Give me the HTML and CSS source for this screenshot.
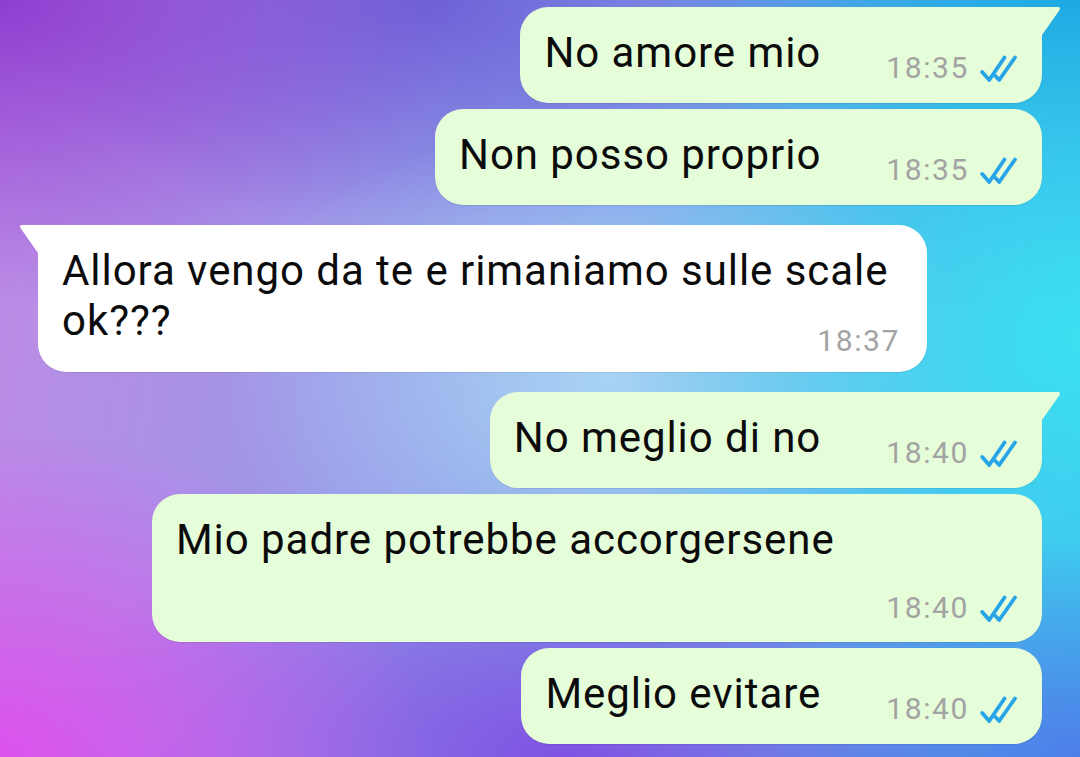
FILE: index.html
```html
<!DOCTYPE html>
<html lang="it">
<head>
<meta charset="utf-8">
<title>Chat</title>
<link rel="stylesheet" href="styles.css">
</head>
<body>
<svg width="0" height="0" class="defs" aria-hidden="true">
  <symbol id="ticks" viewBox="0 0 37 28">
    <path d="M2.2 17 L9.2 25 L24.5 2.5" fill="none" stroke="currentColor" stroke-width="3.8" stroke-linecap="round" stroke-linejoin="round"/>
    <path d="M15.5 21 L19.2 25 L35 2.5" fill="none" stroke="currentColor" stroke-width="3.8" stroke-linecap="round" stroke-linejoin="round"/>
  </symbol>
</svg>
<main class="chat">
  <div class="msg out tail group">
    <div class="bubble inline">
      <span class="text">No amore mio</span>
      <span class="meta"><span class="time">18:35</span><svg class="check"><use href="#ticks"/></svg></span>
    </div>
  </div>
  <div class="msg out">
    <div class="bubble inline">
      <span class="text">Non posso proprio</span>
      <span class="meta"><span class="time">18:35</span><svg class="check"><use href="#ticks"/></svg></span>
    </div>
  </div>
  <div class="msg in tail group">
    <div class="bubble stack overlap">
      <div class="text">Allora vengo da te e rimaniamo sulle scale <span class="last">ok???</span></div>
      <div class="meta"><span class="time">18:37</span></div>
    </div>
  </div>
  <div class="msg out tail group">
    <div class="bubble inline">
      <span class="text">No meglio di no</span>
      <span class="meta"><span class="time">18:40</span><svg class="check"><use href="#ticks"/></svg></span>
    </div>
  </div>
  <div class="msg out">
    <div class="bubble stack below">
      <div class="text">Mio padre potrebbe accorgersene</div>
      <div class="meta"><span class="time">18:40</span><svg class="check"><use href="#ticks"/></svg></div>
    </div>
  </div>
  <div class="msg out">
    <div class="bubble inline">
      <span class="text">Meglio evitare</span>
      <span class="meta"><span class="time">18:40</span><svg class="check"><use href="#ticks"/></svg></span>
    </div>
  </div>
</main>
</body>
</html>
```
FILE: styles.css
```css
html, body {
  margin: 0;
  padding: 0;
  width: 1080px;
  height: 757px;
  overflow: hidden;
}

body {
  font-family: Roboto, "Noto Sans", "Liberation Sans", sans-serif;
  background:
    radial-gradient(ellipse 430px 330px at 0% 100%, rgba(222, 78, 236, 0.95), rgba(222, 78, 236, 0) 100%),
    radial-gradient(ellipse 330px 220px at 100% 100%, rgba(80, 120, 232, 0.9), rgba(80, 120, 232, 0) 100%),
    radial-gradient(ellipse 460px 400px at 100% 45%, rgba(58, 226, 242, 0.95), rgba(58, 226, 242, 0) 100%),
    radial-gradient(ellipse 380px 260px at 56% 50%, rgba(176, 220, 246, 0.85), rgba(176, 220, 246, 0) 100%),
    radial-gradient(ellipse 460px 300px at 0% 0%, rgba(142, 62, 208, 1), rgba(142, 62, 208, 0) 100%),
    radial-gradient(ellipse 420px 240px at 40% 0%, rgba(104, 92, 214, 0.9), rgba(104, 92, 214, 0) 100%),
    radial-gradient(ellipse 520px 280px at 52% 100%, rgba(128, 78, 226, 0.95), rgba(128, 78, 226, 0) 100%),
    radial-gradient(ellipse 420px 300px at 100% 0%, rgba(24, 160, 224, 1), rgba(24, 160, 224, 0) 100%),
    linear-gradient(100deg, #c08ae6 0%, #8f9ce8 45%, #3cbcec 100%);
}

.defs {
  position: absolute;
  width: 0;
  height: 0;
}

.chat {
  display: flex;
  flex-direction: column;
  gap: 6px;
  padding: 7px 38px 0 38px;
}

.msg {
  display: flex;
}

.msg.group {
  margin-top: 14px;
}

.msg.group:first-child {
  margin-top: 0;
}

.msg.out {
  justify-content: flex-end;
}

.msg.in {
  justify-content: flex-start;
}

.bubble {
  position: relative;
  box-sizing: border-box;
  max-width: 890px;
  border-radius: 28px;
  padding: 21px 25px 20px 24px;
  box-shadow: 0 1px 1px rgba(0, 0, 0, 0.08);
}

.bubble.stack {
  flex: 0 0 890px;
}

.in .bubble.stack {
  flex-basis: 889px;
}

.out .bubble {
  background: #e6fdd9;
}

.in .bubble {
  background: #ffffff;
  padding-right: 27px;
}

.out.tail .bubble {
  border-top-right-radius: 0;
}

.in.tail .bubble {
  border-top-left-radius: 0;
}

.out.tail .bubble::after,
.in.tail .bubble::after {
  content: "";
  position: absolute;
  top: 0;
  width: 19px;
  height: 28px;
}

.out.tail .bubble::after {
  left: 100%;
  background: #e6fdd9;
  clip-path: path("M0 0 H15.5 Q19.5 0 17.4 3.2 L0 28 Z");
}

.in.tail .bubble::after {
  right: 100%;
  background: #ffffff;
  clip-path: path("M19 0 H3.5 Q-0.5 0 1.6 3.2 L19 28 Z");
}

.text {
  font-size: 42px;
  line-height: 50px;
  letter-spacing: 0.95px;
  color: #0b0b0b;
}

.bubble.inline {
  display: flex;
  align-items: flex-start;
}

.bubble.inline .text {
  white-space: nowrap;
}

.meta {
  display: flex;
  align-items: flex-end;
  justify-content: flex-end;
  font-size: 30px;
  line-height: 30px;
  height: 30px;
}

.bubble.inline .meta {
  margin-left: 65px;
  margin-top: 25px;
}

.bubble.overlap {
  padding-bottom: 16px;
}

.bubble.overlap .meta {
  margin-top: -20px;
  margin-left: auto;
  width: max-content;
}

.bubble.below {
  padding-bottom: 19px;
}

.bubble.below .meta {
  margin-top: 28px;
}

.time {
  color: #a3a3a3;
  letter-spacing: 1.6px;
}

.check {
  flex: none;
  width: 37px;
  height: 28px;
  margin-left: 11px;
  color: #27a5e8;
}
```
